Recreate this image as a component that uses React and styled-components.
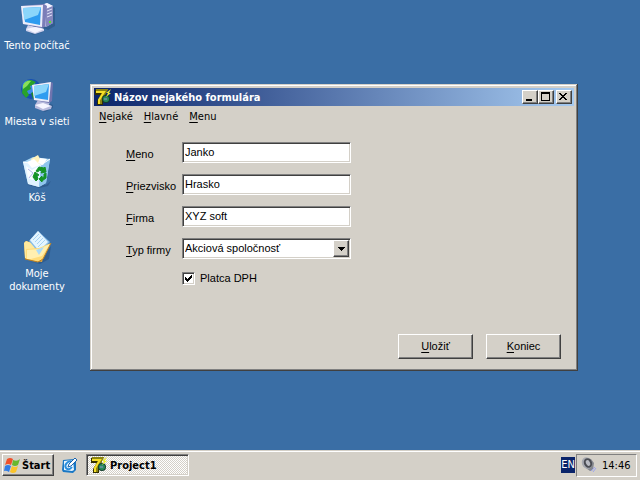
import { useState } from 'react'
import styled, { createGlobalStyle, css } from 'styled-components'

const App = () => {
  const [paysVat, setPaysVat] = useState(true)

  return (
    <>
      <GlobalStyle />
      <Screen>
        <Desktop>
          <Shortcuts>
            <Shortcut label="Tento počítač"><ComputerIcon /></Shortcut>
            <Shortcut label="Miesta v sieti"><NetworkIcon /></Shortcut>
            <Shortcut label="Kôš"><BinIcon /></Shortcut>
            <Shortcut label="Moje dokumenty"><DocumentsIcon /></Shortcut>
          </Shortcuts>

          <Window>
            <TitleBar>
              <DelphiIcon />
              <Title>Názov nejakého formulára</Title>
              <TitleButton aria-label="Minimize">
                <svg width="12" height="10" shapeRendering="crispEdges"><path d="M3 8h6v2H3z" /></svg>
              </TitleButton>
              <TitleButton aria-label="Maximize">
                <svg width="12" height="10" shapeRendering="crispEdges"><path d="M2 1h9v9H2zM3 3v6h7V3z" fillRule="evenodd" /></svg>
              </TitleButton>
              <TitleButton aria-label="Close" $apart>
                <svg width="12" height="10" shapeRendering="crispEdges">
                  <path d="M2 2h2v1h1v1h2V3h1V2h2v1H9v1H8v1H7v1h1v1h1v1h1v1H8V8H7V7H5v1H4v1H2V8h1V7h1V6h1V5H4V4H3V3H2z" />
                </svg>
              </TitleButton>
            </TitleBar>

            <MenuBar>
              <MenuItem><u>N</u>ejaké</MenuItem>
              <MenuItem><u>H</u>lavné</MenuItem>
              <MenuItem><u>M</u>enu</MenuItem>
            </MenuBar>

            <Form onSubmit={(e) => e.preventDefault()}>
              <Fields>
                <Label htmlFor="meno"><u>M</u>eno</Label>
                <TextBox id="meno" defaultValue="Janko" />
                <Label htmlFor="priezvisko"><u>P</u>riezvisko</Label>
                <TextBox id="priezvisko" defaultValue="Hrasko" />
                <Label htmlFor="firma"><u>F</u>irma</Label>
                <TextBox id="firma" defaultValue="XYZ soft" />
                <Label htmlFor="typ"><u>T</u>yp firmy</Label>
                <Combo>
                  <Select id="typ">
                    <option>Akciová spoločnosť</option>
                  </Select>
                  <DropArrow>
                    <svg width="7" height="4" shapeRendering="crispEdges"><path d="M0 0h7v1H6v1H5v1H4v1H3V3H2V2H1V1H0z" /></svg>
                  </DropArrow>
                </Combo>
                <CheckRow>
                  <CheckHold>
                    <CheckBox
                      type="checkbox"
                      checked={paysVat}
                      onChange={(e) => setPaysVat(e.target.checked)}
                    />
                    {paysVat && (
                      <Tick width="13" height="13" shapeRendering="crispEdges">
                        <path d="M3 5h1v1h1v1h1V6h1V5h1V4h1V3h1v3H9v1H8v1H7v1H6v1H5V9H4V8H3z" />
                      </Tick>
                    )}
                  </CheckHold>
                  Platca DPH
                </CheckRow>
              </Fields>
              <Actions>
                <PushButton type="submit"><span><u>U</u>ložiť</span></PushButton>
                <PushButton type="button"><span><u>K</u>oniec</span></PushButton>
              </Actions>
            </Form>
          </Window>
        </Desktop>

        <Taskbar>
          <StartButton><FlagIcon />Štart</StartButton>
          <QuickLaunch aria-label="Desktop"><QuickIcon /></QuickLaunch>
          <TaskButton><DelphiIcon />Project1</TaskButton>
          <Language>EN</Language>
          <Tray><SpeakerIcon />14:46</Tray>
        </Taskbar>
      </Screen>
    </>
  )
}
export default App;

const Shortcut = ({ label, children }) => (
  <ShortcutHold>
    {children}
    <span>{label}</span>
  </ShortcutHold>
)

const ComputerIcon = () => (
  <svg width="36" height="34" viewBox="0 0 36 34">
    <path d="M22 5l8-2 6 3v18l-7 4-8-4z" fill="#1d3e66" opacity=".35" />
    <path d="M20 4l8-3 6 3v17l-7 4-7-4z" fill="#b9bce0" />
    <path d="M20 4l8-3 6 3-7 3z" fill="#f2f2ff" />
    <path d="M27 7l7-3v17l-7 4z" fill="#8688bd" />
    <path d="M28 9l5-2M28 12l5-2M28 15l5-2" stroke="#e2e4fa" />
    <path d="M30 19h2v2h-2z" fill="#5de52b" />
    <path d="M9 25l11-3 6 4-2 4-10 3-5-4z" fill="#234a78" opacity=".4" />
    <path d="M9 23l8 2v-3l5 1v3l3 1v2l-9 3-9-3v-2z" fill="#cdd0ec" />
    <path d="M7 27l9-2 9 2-9 4z" fill="#f5f5ff" />
    <path d="M2 4l23-2 3 2-2 21-4 1L4 22z" fill="#7b7eb8" />
    <path d="M2 4l22-1-1 22L4 22z" fill="#eceefa" />
    <path d="M4 6l18-1-1 18L6 20z" fill="#2e9cf0" />
    <path d="M4 6l18-1-3 8-14 5z" fill="#8bd6fb" />
  </svg>
)

const NetworkIcon = () => (
  <svg width="36" height="34" viewBox="0 0 36 34">
    <circle cx="12" cy="11" r="10" fill="#164fb3" />
    <circle cx="10" cy="9" r="7" fill="#3c8ae9" />
    <path d="M4 7q3-5 8-5l5 2-3 3-3 1 1 3-4 2 2 4-3 3-4-5z" fill="#29a329" />
    <path d="M4 7q3-5 8-4l-4 5-4 3z" fill="#8be05b" />
    <path d="M12 15l5-2 1 5-4 3z" fill="#1c8831" />
    <path d="M16 27l11-3 7 3v3l-8 4-9-4z" fill="#234a78" opacity=".45" />
    <path d="M19 22l12 1-1 4 3 1-1 3-8 2-8-3v-3z" fill="#b7badd" />
    <path d="M16 27l8-2 8 3-8 3z" fill="#f5f5ff" />
    <path d="M14 7l18-3 2 1-1 18-3 2-15-3z" fill="#7074ae" />
    <path d="M13 7l19-3-2 20-15-2z" fill="#eceefa" />
    <path d="M15 8l15-2-1 16-13-2z" fill="#2e9cf0" />
    <path d="M15 8l15-2-3 8-12 4z" fill="#8bd6fb" />
  </svg>
)

const BinIcon = () => (
  <svg width="36" height="34" viewBox="0 0 36 34">
    <path d="M8 28l19 3 5-4-3 5-9 2-11-3z" fill="#234a78" opacity=".5" />
    <path d="M4 8l10-5 17 2-4 24-7 4-11-3z" fill="#a9d7f4" />
    <path d="M4 8l18 3-2 22-11-3z" fill="#dff2ff" />
    <path d="M22 11l9-6-4 24-7 4z" fill="#8fc5ed" />
    <path d="M12 5l7-4 4 8-9 3z" fill="#fff3bd" />
    <path d="M8 8l7-3 6 6-8 3z" fill="#fff" />
    <path d="M21 4l7 1-4 6-5-2z" fill="#fff" />
    <path d="M7 12l6 4 5-3 2 5-6 8-5-2z" fill="#fff" opacity=".8" />
    <path d="M9 15l5 4-4 5" fill="none" stroke="#b2b6ed" />
    <path d="M4 8l18 3 9-6" fill="none" stroke="#fff" />
    <g fill="#159326" stroke="#159326" strokeLinejoin="round">
      <path d="M17 17l3-4 5 1 1-1 1 5-5 1 1-2-3-1-1 2z" />
      <path d="M25 20l2-1v5l-4 3v1l-3-3 3-3v2l2-1z" />
      <path d="M16 18l4 3-2 1 1 3-2 2-3-4z" />
    </g>
  </svg>
)

const DocumentsIcon = () => (
  <svg width="36" height="34" viewBox="0 0 36 34">
    <path d="M7 31l12 2 13-17-2 13-9 5z" fill="#234a78" opacity=".5" />
    <path d="M5 13l2-2 6 2 3 3 13-4-6 20-17-3z" fill="#e5a93b" />
    <path d="M5 13l2-2 6 2 3 3-1 13-9-1z" fill="#ffe99d" />
    <path d="M10 11l9-10 12 11-11 11z" fill="#86bce9" />
    <path d="M11 10l8-9 10 11-9 9z" fill="#e4f5ff" />
    <path d="M14 10l6-6M16 12l6-6M18 14l6-6M19 17l7-7" stroke="#a8d3f2" />
    <path d="M7 19l13-1 12-5-8 16-5 3-12-3z" fill="#ffdc79" />
    <path d="M8 20l12-1 11-5-8 12-15 4z" fill="#ffefb0" />
    <path d="M17 20l8-3-5 8z" fill="#a9dafa" />
    <path d="M6 29l13 3 5-3 8-16" fill="none" stroke="#bd7f20" />
  </svg>
)

const DelphiIcon = () => (
  <svg width="16" height="16" viewBox="0 0 16 16" aria-hidden="true">
    <path d="M0 1h11v4L8 9v7H2v-4l4-6H0z" fill="#343000" />
    <path d="M1 2h9L5 11v4" fill="none" stroke="#8c8410" strokeWidth="4" />
    <path d="M1 3h8L4 11v4" fill="none" stroke="#f6df27" strokeWidth="2" />
    <circle cx="11" cy="10" r="4" fill="#123e2c" />
    <circle cx="11" cy="10" r="3" fill="#27885b" />
    <path d="M9 9h3v2H9z" fill="#5d8d96" />
    <path d="M16 0l-5 4h2l-2 4 5-4h-2z" fill="#eef02b" />
  </svg>
)

const FlagIcon = () => (
  <svg width="16" height="16" viewBox="0 0 16 16" aria-hidden="true">
    <path d="M3 2q3-2 6 0L7 8Q4 6 1 8z" fill="#f0512b" />
    <path d="M9 3q4 2 7-1l-2 6q-3 2-6 0z" fill="#68b82e" />
    <path d="M1 9q3-2 6 0l-2 6q-3-2-5-1z" fill="#317de5" />
    <path d="M8 9q3 2 6 0l-2 6q-3 2-6 0z" fill="#fbc42a" />
  </svg>
)

const QuickIcon = () => (
  <svg width="16" height="16" viewBox="0 0 16 16">
    <path d="M2 3l11-1 2 2v9l-3 3-10-1-1-2z" fill="#1877c5" />
    <path d="M3 4l9-1 1 10-2 1-8-1z" fill="#e9f6ff" />
    <path d="M12 6q-2-3-5-1-4 3-2 6 3 3 6-1" fill="none" stroke="#2a8edc" strokeWidth="2" />
    <path d="M14 1l2 2-6 6-3 1 1-3z" fill="#fff" stroke="#1a64ae" />
  </svg>
)

const SpeakerIcon = () => (
  <svg width="16" height="16" viewBox="0 0 16 16" aria-hidden="true">
    <path d="M4 1l6 1 3 4-1 7-3 1-7-5-1-5z" fill="#85888f" />
    <ellipse cx="6" cy="6" rx="5" ry="6" fill="#a8aab2" transform="rotate(-25 6 6)" />
    <ellipse cx="7" cy="6" rx="4" ry="5" fill="#4b4d54" transform="rotate(-25 7 6)" />
    <ellipse cx="7" cy="6" rx="2" ry="3" fill="#b9bbc3" transform="rotate(-25 7 6)" />
    <path d="M10 14l4-4M12 15l3-4" stroke="#9da5ed" />
  </svg>
)

const uiFont = "'DejaVu Sans Condensed', 'DejaVu Sans', sans-serif"
const formFont = "'Liberation Sans', Arial, sans-serif"

const raised = css`
border: 1px solid;
border-color: #fff #404040 #404040 #fff;
box-shadow: inset -1px -1px #808080;
`
const sunken = css`
border: 1px solid;
border-color: #808080 #fff #fff #808080;
box-shadow: inset 1px 1px #404040, inset -1px -1px #d4d0c8;
`

const GlobalStyle = createGlobalStyle`
* {
    box-sizing: border-box;
}
body {
    margin: 0;
    background: #3a6ea5;
    font: 11px/13px ${uiFont};
    color: #000;
}
button, input, select {
    font: inherit;
    color: inherit;
    margin: 0;
    padding: 0;
    border-radius: 0;
}
svg {
    flex-shrink: 0;
}
u {
    text-underline-offset: 2px;
    text-decoration-skip-ink: none;
}
`
const Screen = styled.div`
min-height: 100vh;
display: flex;
flex-direction: column;
`
const Desktop = styled.main`
flex: 1;
display: flex;
align-items: flex-start;
`
const Shortcuts = styled.div`
width: 74px;
display: flex;
flex-direction: column;
`
const ShortcutHold = styled.button`
background: none;
border: none;
min-height: 76px;
padding: 2px 0;
display: flex;
flex-direction: column;
align-items: center;
gap: 3px;
color: #fff;
`
const Window = styled.section`
flex: 1;
max-width: 800px;
margin: 84px 62px 20px 16px;
padding: 4px;
background: #d4d0c8;
box-shadow: inset -1px -1px #404040, inset 1px 1px #d4d0c8, inset -2px -2px #808080, inset 2px 2px #fff;
`
const TitleBar = styled.header`
height: 18px;
padding: 0 2px 0 1px;
display: flex;
align-items: center;
background: linear-gradient(to right, #0a246a, #a6caf0);
`
const Title = styled.h1`
flex: 1;
margin: 0;
padding-left: 3px;
font-size: 11px;
font-weight: bold;
color: #fff;
`
const TitleButton = styled.button`
${raised}
width: 16px;
height: 14px;
margin-left: ${({ $apart }) => ($apart ? '2px' : '0')};
background: #d4d0c8;
display: flex;
`
const MenuBar = styled.nav`
height: 20px;
padding: 0 5px;
display: flex;
align-items: center;
gap: 11px;
`
const MenuItem = styled.button`
background: none;
border: none;
`
const Form = styled.form`
padding: 16px 13px 8px 32px;
font-family: ${formFont};
`
const Fields = styled.div`
display: grid;
grid-template-columns: 56px 169px;
row-gap: 11px;
`
const Label = styled.label`
padding-top: 6px;
white-space: nowrap;
`
const TextBox = styled.input`
${sunken}
width: 100%;
height: 21px;
padding: 0 2px 1px;
background: #fff;
outline: none;
`
const Combo = styled.div`
position: relative;
`
const Select = styled.select`
${sunken}
appearance: none;
width: 100%;
height: 21px;
padding: 0 18px 1px 2px;
background: #fff;
outline: none;
`
const DropArrow = styled.span`
${raised}
position: absolute;
top: 2px;
right: 2px;
width: 16px;
height: 17px;
background: #d4d0c8;
display: flex;
align-items: center;
justify-content: center;
pointer-events: none;
`
const CheckRow = styled.label`
grid-column: 2;
padding-top: 2px;
display: flex;
align-items: center;
gap: 5px;
`
const CheckHold = styled.span`
position: relative;
display: flex;
`
const CheckBox = styled.input`
${sunken}
appearance: none;
width: 13px;
height: 13px;
background: #fff;
`
const Tick = styled.svg`
position: absolute;
top: 0;
left: 0;
pointer-events: none;
`
const Actions = styled.div`
margin-top: 49px;
display: flex;
justify-content: flex-end;
gap: 13px;
`
const PushButton = styled.button`
${raised}
width: 75px;
height: 25px;
background: #d4d0c8;
`
const Taskbar = styled.footer`
height: 30px;
padding: 2px 3px 2px 2px;
display: flex;
align-items: center;
background: #d4d0c8;
box-shadow: inset 0 1px #d4d0c8, inset 0 2px #fff;
`
const StartButton = styled.button`
${raised}
width: 52px;
height: 22px;
background: #d4d0c8;
display: flex;
align-items: center;
gap: 2px;
padding-left: 1px;
font-weight: bold;
`
const QuickLaunch = styled.button`
margin: 0 9px 0 7px;
display: flex;
background: none;
border: none;
`
const TaskButton = styled.button`
${sunken}
width: 103px;
height: 22px;
padding-left: 4px;
display: flex;
align-items: center;
gap: 3px;
font-weight: bold;
background: repeating-conic-gradient(#fff 0 25%, #d4d0c8 0 50%) 0 0 / 2px 2px;
`
const Language = styled.span`
width: 14px;
height: 16px;
margin-left: auto;
margin-right: 1px;
line-height: 16px;
text-align: center;
color: #fff;
background: #0a246a;
`
const Tray = styled.div`
height: 23px;
width: 61px;
padding: 0 4px;
display: flex;
align-items: center;
gap: 5px;
border: 1px solid;
border-color: #808080 #fff #fff #808080;
`
